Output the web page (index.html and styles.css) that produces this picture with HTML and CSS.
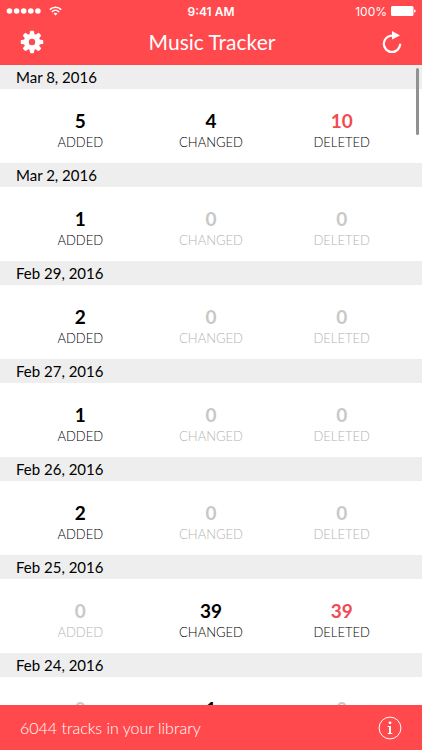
FILE: index.html
```html
<!DOCTYPE html>
<html lang="en">
<head>
    <meta charset="UTF-8">
    <meta name="viewport" content="width=device-width, initial-scale=1.0">
    <title>Music Tracker</title>
    <link rel="stylesheet" href="styles.css">
</head>
<body>

    <header>
        <div class="status-bar">
            <div class="signal">
                <svg width="35" height="8" viewBox="0 0 35 8" fill="#fff">
                    <circle cx="3.5" cy="4" r="2.8"/>
                    <circle cx="10.6" cy="4" r="2.8"/>
                    <circle cx="17.7" cy="4" r="2.8"/>
                    <circle cx="24.8" cy="4" r="2.8"/>
                    <circle cx="31.9" cy="4" r="2.8"/>
                </svg>
                <svg width="13" height="10" viewBox="0 0 13 10" fill="none" stroke="#fff" stroke-width="1.5">
                    <path d="M0.8 3.6a8 8 0 0 1 11.4 0"/>
                    <path d="M2.9 5.9a5 5 0 0 1 7.2 0"/>
                    <path d="M6.5 9.6L4.5 7.6a2.9 2.9 0 0 1 4 0z" fill="#fff" stroke="none"/>
                </svg>
            </div>
            <span class="clock">9:41 AM</span>
            <div class="battery">
                <span>100%</span>
                <svg width="25" height="10" viewBox="0 0 25 10" fill="#fff">
                    <rect x="0" y="0" width="22.5" height="10" rx="1.5"/>
                    <path d="M23.2 3.2q1.6 0.5 1.6 1.8t-1.6 1.8z"/>
                </svg>
            </div>
        </div>
        <div class="nav-bar">
            <button type="button" class="icon-button" aria-label="Settings">
                <svg width="24" height="24" viewBox="-12 -12 24 24">
                    <g fill="#fff">
                        <path id="tooth" d="M-2.6 -6.5L-2 -10.6Q-1.9 -11.2 -1.3 -11.2H1.3Q1.9 -11.2 2 -10.6L2.6 -6.5z"/>
                        <use href="#tooth" transform="rotate(45)"/>
                        <use href="#tooth" transform="rotate(90)"/>
                        <use href="#tooth" transform="rotate(135)"/>
                        <use href="#tooth" transform="rotate(180)"/>
                        <use href="#tooth" transform="rotate(225)"/>
                        <use href="#tooth" transform="rotate(270)"/>
                        <use href="#tooth" transform="rotate(315)"/>
                    </g>
                    <circle r="5.7" fill="none" stroke="#fff" stroke-width="5"/>
                </svg>
            </button>
            <h1>Music Tracker</h1>
            <button type="button" class="icon-button" aria-label="Refresh">
                <svg width="24" height="24" viewBox="0 0 24 24">
                    <path d="M13 5.6H12a8.2 8.2 0 1 0 8.2 8.2" fill="none" stroke="#fff" stroke-width="2.2"/>
                    <path d="M12 1L20 5.4L12 9.4z" fill="#fff"/>
                </svg>
            </button>
        </div>
    </header>

    <div class="content">
        <main id="days"></main>
        <div class="scroll-thumb"></div>
    </div>

    <footer>
        <span>6044 tracks in your library</span>
        <button type="button" class="icon-button" aria-label="Info">
            <svg width="24" height="24" viewBox="0 0 24 24">
                <circle cx="12" cy="12" r="10.9" fill="none" stroke="#fff" stroke-width="1"/>
                <circle cx="12" cy="6.8" r="1.4" fill="#fff"/>
                <path d="M9.7 10h3.3v7h1.3v1H9.7v-1H11v-6H9.7z" fill="#fff"/>
            </svg>
        </button>
    </footer>

    <script src="script.js"></script>

</body>
</html>
```
FILE: styles.css
```css
* {
    box-sizing: border-box;
}

body {
    font-family: Lato, 'Open Sans', sans-serif;
    background-color: #fff;
    color: #000;
    display: flex;
    flex-direction: column;
    height: 100vh;
    margin: 0;
}

header, footer {
    background-color: #ff494d;
    color: #fff;
    flex: none;
}

/* Status bar */
.status-bar {
    display: grid;
    grid-template-columns: 1fr auto 1fr;
    align-items: center;
    height: 22px;
    padding: 0 6px;
    font-family: Inter, sans-serif;
    font-size: 12px;
}

.signal, .battery {
    display: flex;
    align-items: center;
    gap: 8px;
}

.battery {
    justify-content: flex-end;
    gap: 4px;
}

.clock {
    font-weight: 600;
}

/* Navigation bar */
.nav-bar {
    display: flex;
    align-items: center;
    justify-content: space-between;
    height: 43px;
    padding: 0 18px 4px 20px;
}

h1 {
    font-size: 21px;
    font-weight: 400;
    margin: 0;
}

.icon-button {
    display: block;
    padding: 0;
    border: none;
    background: none;
    cursor: pointer;
}

.icon-button svg {
    display: block;
}

/* List of days */
.content {
    position: relative;
    flex: 1;
    min-height: 0;
}

main {
    height: 100%;
    overflow-y: auto;
    scrollbar-width: none;
}

.scroll-thumb {
    position: absolute;
    top: 3px;
    right: 3px;
    width: 3px;
    height: 67px;
    border-radius: 2px;
    background-color: #919191;
}

h2 {
    background-color: #eee;
    font-size: 15px;
    font-weight: 400;
    line-height: 24px;
    margin: 0;
    padding: 0 16px;
}

.counts {
    display: grid;
    grid-template-columns: repeat(3, 1fr);
    height: 74px;
    padding: 20px 15px 0;
    text-align: center;
}

.number {
    font-size: 19px;
    font-weight: 700;
    line-height: 24px;
}

.label {
    font-size: 13px;
    font-weight: 300;
    line-height: 18px;
}

.deleted .number {
    color: #f04b55;
}

.empty .number {
    color: #c8c8c8;
}

.empty .label {
    color: #b4b4b4;
}

footer {
    display: flex;
    align-items: center;
    justify-content: space-between;
    height: 45px;
    padding: 0 20px;
    font-size: 16px;
    font-weight: 300;
}
```
FILE: script.js
```js
const days = [
    { date: 'Mar 8, 2016', added: 5, changed: 4, deleted: 10 },
    { date: 'Mar 2, 2016', added: 1, changed: 0, deleted: 0 },
    { date: 'Feb 29, 2016', added: 2, changed: 0, deleted: 0 },
    { date: 'Feb 27, 2016', added: 1, changed: 0, deleted: 0 },
    { date: 'Feb 26, 2016', added: 2, changed: 0, deleted: 0 },
    { date: 'Feb 25, 2016', added: 0, changed: 39, deleted: 39 },
    { date: 'Feb 24, 2016', added: 0, changed: 1, deleted: 0 }
];

const list = document.getElementById('days');

days.forEach((day) => {
    const section = document.createElement('section');
    const title = document.createElement('h2');
    title.textContent = day.date;
    section.appendChild(title);

    const counts = document.createElement('div');
    counts.className = 'counts';
    ['added', 'changed', 'deleted'].forEach((kind) => {
        const cell = document.createElement('div');
        cell.className = day[kind] === 0 ? 'empty' : kind;

        const number = document.createElement('div');
        number.className = 'number';
        number.textContent = day[kind];

        const label = document.createElement('div');
        label.className = 'label';
        label.textContent = kind.toUpperCase();

        cell.append(number, label);
        counts.appendChild(cell);
    });

    section.appendChild(counts);
    list.appendChild(section);
});
```
